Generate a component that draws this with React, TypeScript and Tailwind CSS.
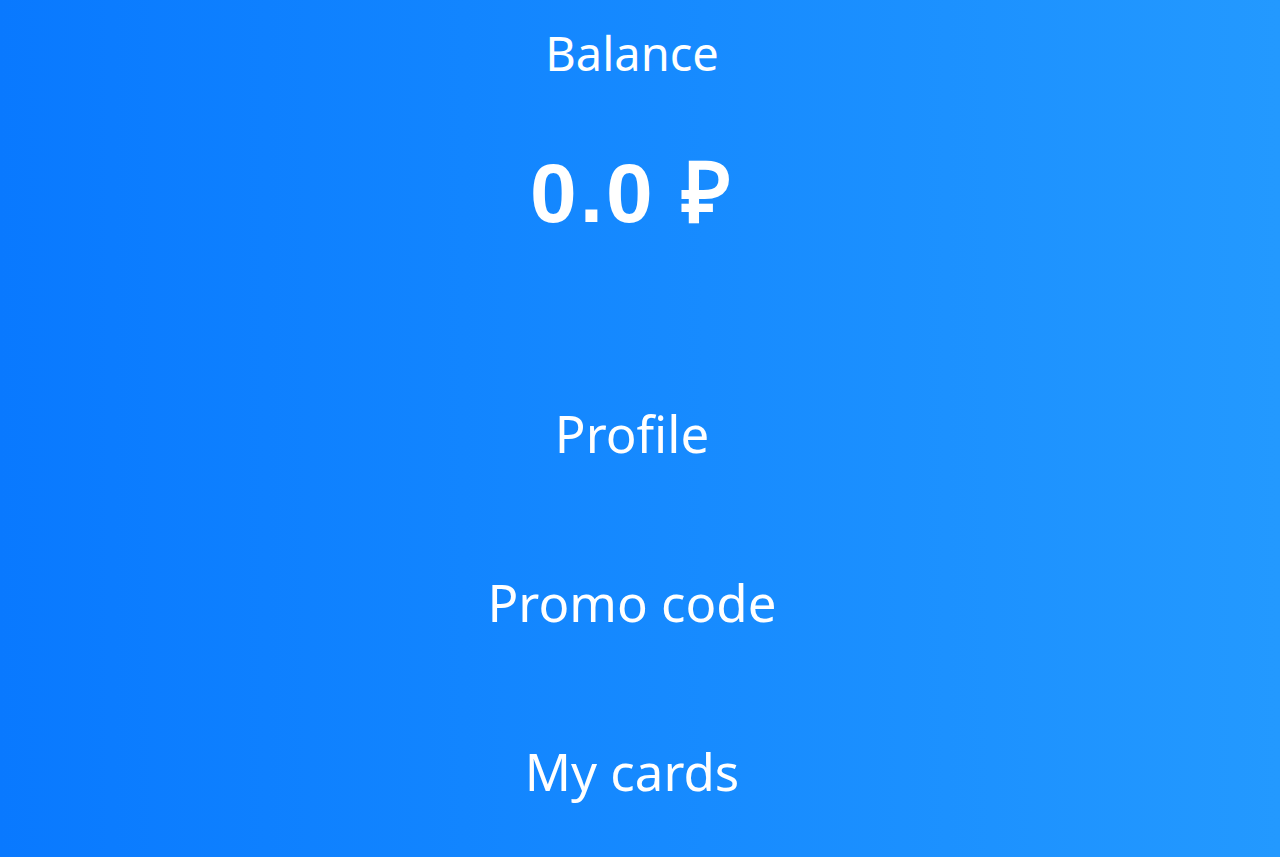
export default function App() {
  const menu = ["Profile", "Promo code", "My cards"];
  return (
    <div className="h-[857px] w-full overflow-hidden bg-gradient-to-r from-[#0979ff] to-[#2399ff] text-white">
      <div className="flex flex-col items-center pr-4 font-[family-name:'Noto_Sans',sans-serif]">
        <div className="flex h-[106px] items-center text-[47px]">Balance</div>
        <div className="flex h-[174px] items-center font-[family-name:'Liberation_Sans',Arial,sans-serif] text-[84px] font-bold tracking-[3px]">
          0.0 ₽
        </div>
        <div className="h-[69px]" />
        {menu.map((m) => (
          <button key={m} className="flex h-[169px] items-center text-[51px]">
            {m}
          </button>
        ))}
      </div>
    </div>
  );
}
